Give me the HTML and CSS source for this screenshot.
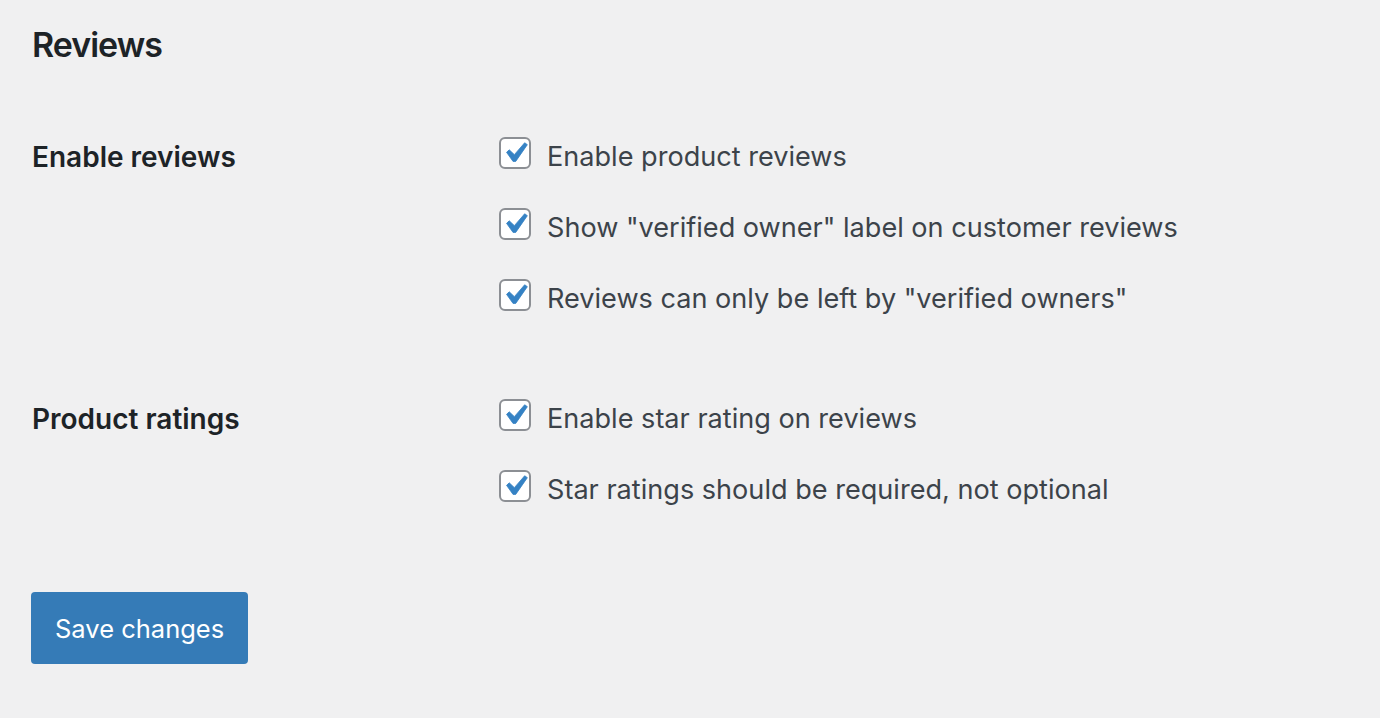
FILE: index.html
```html
<!doctype html>
<html lang="en">
<head>
    <meta charset="UTF-8">
    <title>Reviews settings</title>
    <link rel="stylesheet" href="styles.css">
</head>
<body>
<div class="wrap">
    <h2>Reviews</h2>
    <div class="form-table">
        <div class="row">
            <div class="th">Enable reviews</div>
            <div class="td">
                <label class="option"><span class="checkbox"><svg viewBox="0 0 20 20"><path d="M14.83 4.89l1.34.94-5.81 8.38H9.02L5.78 9.67l1.34-1.25 2.57 2.4z"/></svg></span>Enable product reviews</label>
                <label class="option"><span class="checkbox"><svg viewBox="0 0 20 20"><path d="M14.83 4.89l1.34.94-5.81 8.38H9.02L5.78 9.67l1.34-1.25 2.57 2.4z"/></svg></span>Show "verified owner" label on customer reviews</label>
                <label class="option"><span class="checkbox"><svg viewBox="0 0 20 20"><path d="M14.83 4.89l1.34.94-5.81 8.38H9.02L5.78 9.67l1.34-1.25 2.57 2.4z"/></svg></span>Reviews can only be left by "verified owners"</label>
            </div>
        </div>
        <div class="row">
            <div class="th">Product ratings</div>
            <div class="td">
                <label class="option"><span class="checkbox"><svg viewBox="0 0 20 20"><path d="M14.83 4.89l1.34.94-5.81 8.38H9.02L5.78 9.67l1.34-1.25 2.57 2.4z"/></svg></span>Enable star rating on reviews</label>
                <label class="option"><span class="checkbox"><svg viewBox="0 0 20 20"><path d="M14.83 4.89l1.34.94-5.81 8.38H9.02L5.78 9.67l1.34-1.25 2.57 2.4z"/></svg></span>Star ratings should be required, not optional</label>
            </div>
        </div>
    </div>
    <p class="submit"><button class="button-primary" type="button">Save changes</button></p>
</div>
</body>
</html>
```

FILE: styles.css
```css
html,
body {
    margin: 0;
    background: #f0f0f1;
}

body {
    font-family: Inter, "Noto Sans", sans-serif;
    color: #3c434a;
}

.wrap {
    padding: 23px 32px 0;
}

h2 {
    margin: 0;
    font-size: 34px;
    line-height: 44px;
    font-weight: 600;
    letter-spacing: -1px;
    color: #1d2327;
}

.form-table {
    display: flex;
    flex-direction: column;
    gap: 80px;
    margin-top: 70px;
}

.row {
    display: grid;
    grid-template-columns: 467px 1fr;
}

.th {
    font-size: 28px;
    line-height: 40px;
    font-weight: 600;
    color: #1d2327;
}

.td {
    display: flex;
    flex-direction: column;
    gap: 31px;
}

.option {
    display: flex;
    align-items: flex-start;
    gap: 16px;
    font-size: 27.1px;
    line-height: 40px;
}

.checkbox {
    box-sizing: border-box;
    width: 32px;
    height: 32px;
    flex: none;
    border: 2px solid #8c8f94;
    border-radius: 6px;
    background: #fff;
}

.checkbox svg {
    display: block;
    width: 40px;
    height: 40px;
    margin: -6px 0 0 -6px;
    fill: #3582c4;
    stroke: #3582c4;
    stroke-width: 0.4;
    stroke-linejoin: round;
}

.submit {
    margin: 82px 0 0 -1px;
}

.button-primary {
    height: 72px;
    padding: 0 24px;
    border: 0;
    border-radius: 4px;
    background: #357bb7;
    color: #fff;
    font-family: inherit;
    font-size: 25.5px;
}
```
